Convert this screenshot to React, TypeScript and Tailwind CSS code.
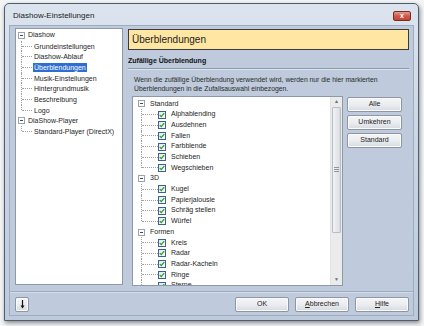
import React from "react";

type Node = { label: string; children?: string[] };

const groups: Node[] = [
  { label: "Standard", children: ["Alphablending", "Ausdehnen", "Fallen", "Farbblende", "Schieben", "Wegschieben"] },
  { label: "3D", children: ["Kugel", "Papierjalousie", "Schräg stellen", "Würfel"] },
  { label: "Formen", children: ["Kreis", "Radar", "Radar-Kacheln", "Ringe", "Sterne"] },
];

const navTree: Node[] = [
  {
    label: "Diashow",
    children: [
      "Grundeinstellungen",
      "Diashow-Ablauf",
      "Überblendungen",
      "Musik-Einstellungen",
      "Hintergrundmusik",
      "Beschreibung",
      "Logo",
    ],
  },
  { label: "DiaShow-Player", children: ["Standard-Player (DirectX)"] },
];

function Expander() {
  return (
    <span className="relative z-10 flex h-[7px] w-[7px] items-center justify-center border border-[#9aa3ad] bg-white">
      <span className="h-px w-[3px] bg-[#3b4a5c]" />
    </span>
  );
}

function Check() {
  return (
    <span className="flex h-[8px] w-[8px] items-center justify-center border border-[#3f5f8f] bg-gradient-to-br from-[#dfe6ee] to-white">
      <svg width="6" height="6" viewBox="0 0 6 6">
        <path d="M0.8 3.1 L2.3 4.6 L5.2 1.2" fill="none" stroke="#1fa31f" strokeWidth="1.3" />
      </svg>
    </span>
  );
}

function Btn({ children, className = "" }: { children: React.ReactNode; className?: string }) {
  return (
    <div
      className={`flex items-center justify-center rounded-[2px] border border-[#8d96a3] bg-gradient-to-b from-[#f4f5f7] via-[#ebedf0] to-[#d6dae0] text-[7px] text-[#222] shadow-[inset_0_0_0_1px_#fbfbfc] ${className}`}
    >
      {children}
    </div>
  );
}

export default function App() {
  return (
    <div className="h-[326px] w-[424px] overflow-hidden bg-[#f3f4f6] pl-[4px] pt-[3px] font-['Liberation_Sans',Arial,sans-serif] text-[#1e1e1e]">
      <div className="flex h-[318px] w-[415px] flex-col rounded-t-[5px] border border-[#4f5d70] bg-gradient-to-b from-[#dbe4ee] via-[#c9d5e3] to-[#bccadb] shadow-[1px_2px_4px_rgba(0,0,0,0.45)]">
        {/* title bar */}
        <div className="flex h-[21px] shrink-0 items-center justify-between pl-[8px] pr-[7px] pt-[2px]">
          <span className="text-[8px] text-[#1b1b1b]">Diashow-Einstellungen</span>
          <div className="flex h-[10px] w-[18px] items-center justify-center rounded-[2px] border border-[#7a2a22] bg-gradient-to-b from-[#e49a8c] via-[#cf5a48] to-[#c24634]">
            <span className="text-[7px] font-bold leading-none text-white">x</span>
          </div>
        </div>

        {/* body */}
        <div className="mx-[4px] mb-[4px] flex flex-1 flex-col border border-[#9eacbf] bg-[#bfcbdc]">
          <div className="flex gap-[5px] pl-[5px] pr-[4px] pt-[2px]">
            {/* navigation tree */}
            <div className="h-[257px] w-[108px] shrink-0 border border-[#8e99a8] bg-white pt-[1px] text-[7px]">
              {navTree.map((n) => (
                <div key={n.label}>
                  <div className="flex h-[10.7px] items-center">
                    <span className="ml-[2px] w-[7px]">
                      <Expander />
                    </span>
                    <span className="ml-[3px]">{n.label}</span>
                  </div>
                  {n.children?.map((c, i) => (
                    <div key={c} className="relative flex h-[10.7px] items-center">
                      <span
                        className={`absolute left-[5px] top-0 border-l border-dotted border-[#a0a0a0] ${
                          i === n.children!.length - 1 ? "h-[5px]" : "h-full"
                        }`}
                      />
                      <span className="ml-[6px] w-[10px] border-t border-dotted border-[#a0a0a0]" />
                      <span
                        className={`ml-[1px] px-[1px] leading-[9px] ${
                          c === "Überblendungen" ? "bg-[#2f6ecf] text-white" : ""
                        }`}
                      >
                        {c}
                      </span>
                    </div>
                  ))}
                </div>
              ))}
            </div>

            {/* right panel */}
            <div className="flex flex-1 flex-col pt-[1px]">
              <div className="flex h-[21px] items-center border border-[#3b3b3b] bg-[#ffe7a3] pl-[3px] text-[10px] text-[#222]">
                Überblendungen
              </div>
              <div className="mt-[6px] border-b border-[#8c9bb0] pb-[1px] text-[7px] font-bold text-[#111]">
                Zufällige Überblendung
              </div>
              <div className="h-px bg-[#dbe3ec]" />
              <p className="mt-[5px] pl-[6px] text-[6.8px] leading-[9px] text-[#2a2a2a]">
                Wenn die zufällige Überblendung verwendet wird, werden nur die hier markierten
                <br />
                Überblendungen in die Zufallsauswahl einbezogen.
              </p>
              <div className="mt-[3px] flex gap-[4px] pl-[4px]">
                {/* transition list */}
                <div className="flex h-[190px] w-[211px] border border-[#8e99a8] bg-white">
                  <div className="flex-1 overflow-hidden pt-[2px] text-[7px]">
                    {groups.map((g) => (
                      <div key={g.label}>
                        <div className="flex h-[10.7px] items-center">
                          <span className="ml-[5px] w-[7px]">
                            <Expander />
                          </span>
                          <span className="ml-[5px]">{g.label}</span>
                        </div>
                        {g.children?.map((c, i) => (
                          <div key={c} className="relative flex h-[10.7px] items-center">
                            <span
                              className={`absolute left-[8px] top-0 border-l border-dotted border-[#a0a0a0] ${
                                i === g.children!.length - 1 ? "h-[5px]" : "h-full"
                              }`}
                            />
                            <span className="ml-[9px] w-[16px] border-t border-dotted border-[#a0a0a0]" />
                            <Check />
                            <span className="ml-[5px]">{c}</span>
                          </div>
                        ))}
                      </div>
                    ))}
                  </div>
                  {/* scrollbar */}
                  <div className="flex w-[12px] flex-col border-l border-[#e3e3e3] bg-[#ebebeb]">
                    <div className="flex h-[10px] items-center justify-center text-[5px] text-[#6d6d6d]">▲</div>
                    <div className="mx-[1px] flex h-[126px] flex-col items-center justify-center rounded-[1px] border border-[#b9bec6] bg-gradient-to-r from-[#f2f3f5] to-[#dadee3]">
                      <div className="flex flex-col gap-[1px]">
                        <span className="h-px w-[5px] bg-[#8f959c]" />
                        <span className="h-px w-[5px] bg-[#8f959c]" />
                        <span className="h-px w-[5px] bg-[#8f959c]" />
                      </div>
                    </div>
                    <div className="flex-1" />
                    <div className="flex h-[10px] items-center justify-center text-[5px] text-[#6d6d6d]">▼</div>
                  </div>
                </div>
                {/* side buttons */}
                <div className="flex flex-col gap-[3px] pt-[1px]">
                  <Btn className="h-[15px] w-[55px]">Alle</Btn>
                  <Btn className="h-[15px] w-[55px]">Umkehren</Btn>
                  <Btn className="h-[15px] w-[55px]">Standard</Btn>
                </div>
              </div>
            </div>
          </div>

          {/* separator */}
          <div className="mt-[5px] h-px bg-[#9dabbf]" />
          <div className="h-px bg-[#d4dde8]" />

          {/* bottom buttons */}
          <div className="flex items-center justify-between pl-[5px] pr-[4px] pt-[4px]">
            <Btn className="h-[15px] w-[14px]">
              <svg width="5" height="9" viewBox="0 0 5 9">
                <path d="M2.5 0 V7" stroke="#111" strokeWidth="1.2" />
                <path d="M0.5 5.5 L2.5 8.5 L4.5 5.5 Z" fill="#111" />
              </svg>
            </Btn>
            <div className="flex gap-[6px]">
              <Btn className="h-[15px] w-[54px]">OK</Btn>
              <Btn className="h-[15px] w-[54px]">
                <span>
                  <span className="underline">A</span>bbrechen
                </span>
              </Btn>
              <Btn className="h-[15px] w-[54px]">
                <span>
                  <span className="underline">H</span>ilfe
                </span>
              </Btn>
            </div>
          </div>
        </div>
      </div>
    </div>
  );
}
